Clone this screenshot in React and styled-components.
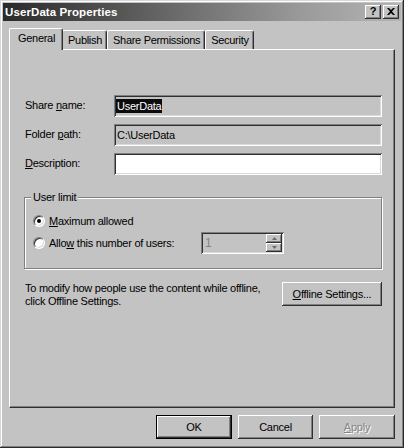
import React from 'react';
import styled, { createGlobalStyle, css } from 'styled-components';

const FACE = '#c3c3c3';
const UI_FONT = `"Liberation Sans", Arial, sans-serif`;

const Global = createGlobalStyle`
  html, body { margin: 0; padding: 0; background: ${FACE}; }
  body { font-family: ${UI_FONT}; font-size: 11px; letter-spacing: -0.25px; color: #000; }
  #root { width: 404px; height: 448px; }
`;

const raised = css`
  box-shadow: inset -1px -1px #303030, inset 1px 1px #ffffff, inset -2px -2px #808080;
`;

const sunken = css`
  box-shadow: inset 1px 1px #808080, inset -1px -1px #ffffff, inset 2px 2px #303030, inset -2px -2px #dadada;
`;

const Window = styled.div`
  box-sizing: border-box;
  width: 404px;
  height: 448px;
  padding: 3px;
  background: ${FACE};
  display: flex;
  flex-direction: column;
  box-shadow: inset -1px -1px #2a2a2a, inset 1px 1px #d8d8d8, inset -2px -2px #808080, inset 2px 2px #ffffff;
`;

const TitleBar = styled.div`
  height: 18px;
  flex: none;
  display: flex;
  align-items: center;
  padding: 0 2px;
  background: linear-gradient(to right, #2a2a2a 0%, #5e5e5e 35%, #9a9a9a 75%, #b4b4b4 100%);
`;

const Title = styled.div`
  flex: 1;
  color: #fff;
  font-weight: bold;
  font-size: 11.5px;
  letter-spacing: 0.1px;
`;

const CaptionButtons = styled.div`
  display: flex;
  gap: 2px;
`;

const CaptionButton = styled.div`
  width: 16px;
  height: 14px;
  box-sizing: border-box;
  background: ${FACE};
  ${raised};
  display: flex;
  align-items: center;
  justify-content: center;
  font-weight: bold;
  font-size: 11px;
  letter-spacing: 0;
  line-height: 1;
  padding-bottom: 1px;
`;

const Body = styled.div`
  flex: 1;
  display: flex;
  flex-direction: column;
  padding: 7px 6px 0 6px;
  min-height: 0;
`;

const TabStrip = styled.div`
  height: 21px;
  flex: none;
  display: flex;
  align-items: flex-end;
  padding-left: 2px;
`;

const Tab = styled.div`
  box-sizing: border-box;
  height: ${p => (p.$active ? 22 : 19)}px;
  margin: 0 ${p => (p.$active ? -1 : 0)}px ${p => (p.$active ? -1 : 0)}px ${p => (p.$active ? -2 : 0)}px;
  padding: 0 ${p => (p.$active ? 7 : 4)}px ${p => (p.$active ? 3 : 1)}px ${p => (p.$active ? 8 : 5)}px;
  display: flex;
  align-items: center;
  background: ${FACE};
  border-top: 1px solid #fff;
  border-left: 1px solid #fff;
  border-right: 1px solid #303030;
  border-radius: 2px 3px 0 0;
  box-shadow: inset -1px 0 #808080;
  position: relative;
  z-index: ${p => (p.$active ? 1 : 0)};
  white-space: nowrap;
  letter-spacing: -0.3px;
`;

const Panel = styled.div`
  flex: 1;
  box-sizing: border-box;
  border: 1px solid;
  border-color: #fff #303030 #303030 #fff;
  box-shadow: inset -1px -1px #808080;
  padding: 45px 12px 0 15px;
  display: flex;
  flex-direction: column;
`;

const FormGrid = styled.div`
  display: grid;
  grid-template-columns: 89px 1fr;
  row-gap: 7px;
  align-items: center;
`;

const Label = styled.div`
  white-space: nowrap;
  padding-bottom: 2px;
`;

const Key = styled.span`
  text-decoration: underline;
  text-underline-offset: 1px;
`;

const Field = styled.div`
  box-sizing: border-box;
  height: 22px;
  padding: 0 3px 0 2px;
  display: flex;
  align-items: center;
  background: ${p => (p.$white ? '#fff' : FACE)};
  ${sunken};
`;

const FieldText = styled.span`
  padding: 0 1px;
  line-height: 14px;
`;

const Selected = styled.span`
  background: #0c0c0c;
  color: #fff;
  padding: 0 1px;
  line-height: 14px;
`;

const Group = styled.fieldset`
  margin: 15px 0 0 -1px;
  padding: 9px 8px 14px 8px;
  border: 1px solid #808080;
  box-shadow: inset 1px 1px #fff, 1px 1px #fff;
  min-width: 0;
`;

const Legend = styled.legend`
  padding: 0 2px;
  margin-left: -2px;
  line-height: 14px;
  background: ${FACE};
`;

const OptionGrid = styled.div`
  display: grid;
  grid-template-columns: 168px 83px;
  row-gap: 3px;
  align-items: center;
`;

const RadioRow = styled.div`
  display: flex;
  align-items: center;
  gap: 4px;
  height: ${p => p.$h || 16}px;
  grid-column: ${p => (p.$span ? '1 / -1' : 'auto')};
`;

const Radio = styled.span`
  box-sizing: border-box;
  width: 12px;
  height: 12px;
  border-radius: 50%;
  border: 1px solid;
  border-color: #808080 #fff #fff #808080;
  background: #fff;
  box-shadow: inset 1px 1px #303030, inset -1px -1px #dadada;
  display: flex;
  align-items: center;
  justify-content: center;
  flex: none;
  &::after {
    content: '';
    width: 4px;
    height: 4px;
    border-radius: 50%;
    background: ${p => (p.$checked ? '#000' : 'transparent')};
  }
`;

const Spinner = styled.div`
  box-sizing: border-box;
  height: 22px;
  display: flex;
  align-items: stretch;
  padding: 2px;
  background: ${FACE};
  ${sunken};
`;

const SpinValue = styled.span`
  flex: 1;
  color: #858585;
  padding-left: 2px;
  line-height: 18px;
  font-size: 12px;
`;

const SpinButtons = styled.div`
  width: 16px;
  display: flex;
  flex-direction: column;
`;

const SpinButton = styled.div`
  flex: 1;
  box-sizing: border-box;
  background: ${FACE};
  ${raised};
  display: flex;
  align-items: center;
  justify-content: center;
`;

const InfoRow = styled.div`
  margin-top: 13px;
  display: flex;
  justify-content: space-between;
  align-items: flex-start;
`;

const InfoText = styled.div`
  line-height: 13px;
  white-space: nowrap;
`;

const Button = styled.div`
  box-sizing: border-box;
  width: ${p => p.$w || 75}px;
  height: 24px;
  display: flex;
  align-items: center;
  justify-content: center;
  background: ${FACE};
  padding-bottom: 1px;
  color: ${p => (p.$disabled ? '#858585' : '#000')};
  text-shadow: ${p => (p.$disabled ? '1px 1px #fff' : 'none')};
  ${p =>
    p.$default
      ? css`
          box-shadow: inset 0 0 0 1px #000, inset -2px -2px #303030, inset 2px 2px #fff, inset -3px -3px #808080;
        `
      : raised};
`;

const Footer = styled.div`
  flex: none;
  display: flex;
  justify-content: flex-end;
  gap: 6px;
  padding: 7px 0 6px;
`;

const CloseGlyph = () => (
  <svg width="8" height="7" viewBox="0 0 8 7">
    <path d="M0 0h2l2 2 2-2h2L5 3.5 8 7H6L4 5 2 7H0l3-3.5z" fill="#000" />
  </svg>
);

const Arrow = ({ up }) => (
  <svg width="5" height="3" viewBox="0 0 5 3">
    <path d={up ? 'M2.5 0L5 3H0z' : 'M0 0h5L2.5 3z'} fill="#6a6a6a" />
  </svg>
);

export default function App() {
  return (
    <>
      <Global />
      <Window>
        <TitleBar>
          <Title>UserData Properties</Title>
          <CaptionButtons>
            <CaptionButton>?</CaptionButton>
            <CaptionButton>
              <CloseGlyph />
            </CaptionButton>
          </CaptionButtons>
        </TitleBar>
        <Body>
          <TabStrip>
            <Tab $active>General</Tab>
            <Tab>Publish</Tab>
            <Tab>Share Permissions</Tab>
            <Tab>Security</Tab>
          </TabStrip>
          <Panel>
            <FormGrid>
              <Label>
                Share <Key>n</Key>ame:
              </Label>
              <Field>
                <Selected>UserData</Selected>
              </Field>
              <Label>
                Folder <Key>p</Key>ath:
              </Label>
              <Field>
                <FieldText>C:\UserData</FieldText>
              </Field>
              <Label>
                <Key>D</Key>escription:
              </Label>
              <Field $white />
            </FormGrid>
            <Group>
              <Legend>User limit</Legend>
              <OptionGrid>
                <RadioRow $span>
                  <Radio $checked />
                  <span>
                    <Key>M</Key>aximum allowed
                  </span>
                </RadioRow>
                <RadioRow $h={22}>
                  <Radio />
                  <span>
                    Allo<Key>w</Key> this number of users:
                  </span>
                </RadioRow>
                <Spinner>
                  <SpinValue>1</SpinValue>
                  <SpinButtons>
                    <SpinButton>
                      <Arrow up />
                    </SpinButton>
                    <SpinButton>
                      <Arrow />
                    </SpinButton>
                  </SpinButtons>
                </Spinner>
              </OptionGrid>
            </Group>
            <InfoRow>
              <InfoText>
                To modify how people use the content while offline,
                <br />
                click Offline Settings.
              </InfoText>
              <Button $w={100}>
                <span>
                  <Key>O</Key>ffline Settings...
                </span>
              </Button>
            </InfoRow>
          </Panel>
          <Footer>
            <Button $default $w={76}>OK</Button>
            <Button>Cancel</Button>
            <Button $disabled $w={76}>
              <span>
                <Key>A</Key>pply
              </span>
            </Button>
          </Footer>
        </Body>
      </Window>
    </>
  );
}
